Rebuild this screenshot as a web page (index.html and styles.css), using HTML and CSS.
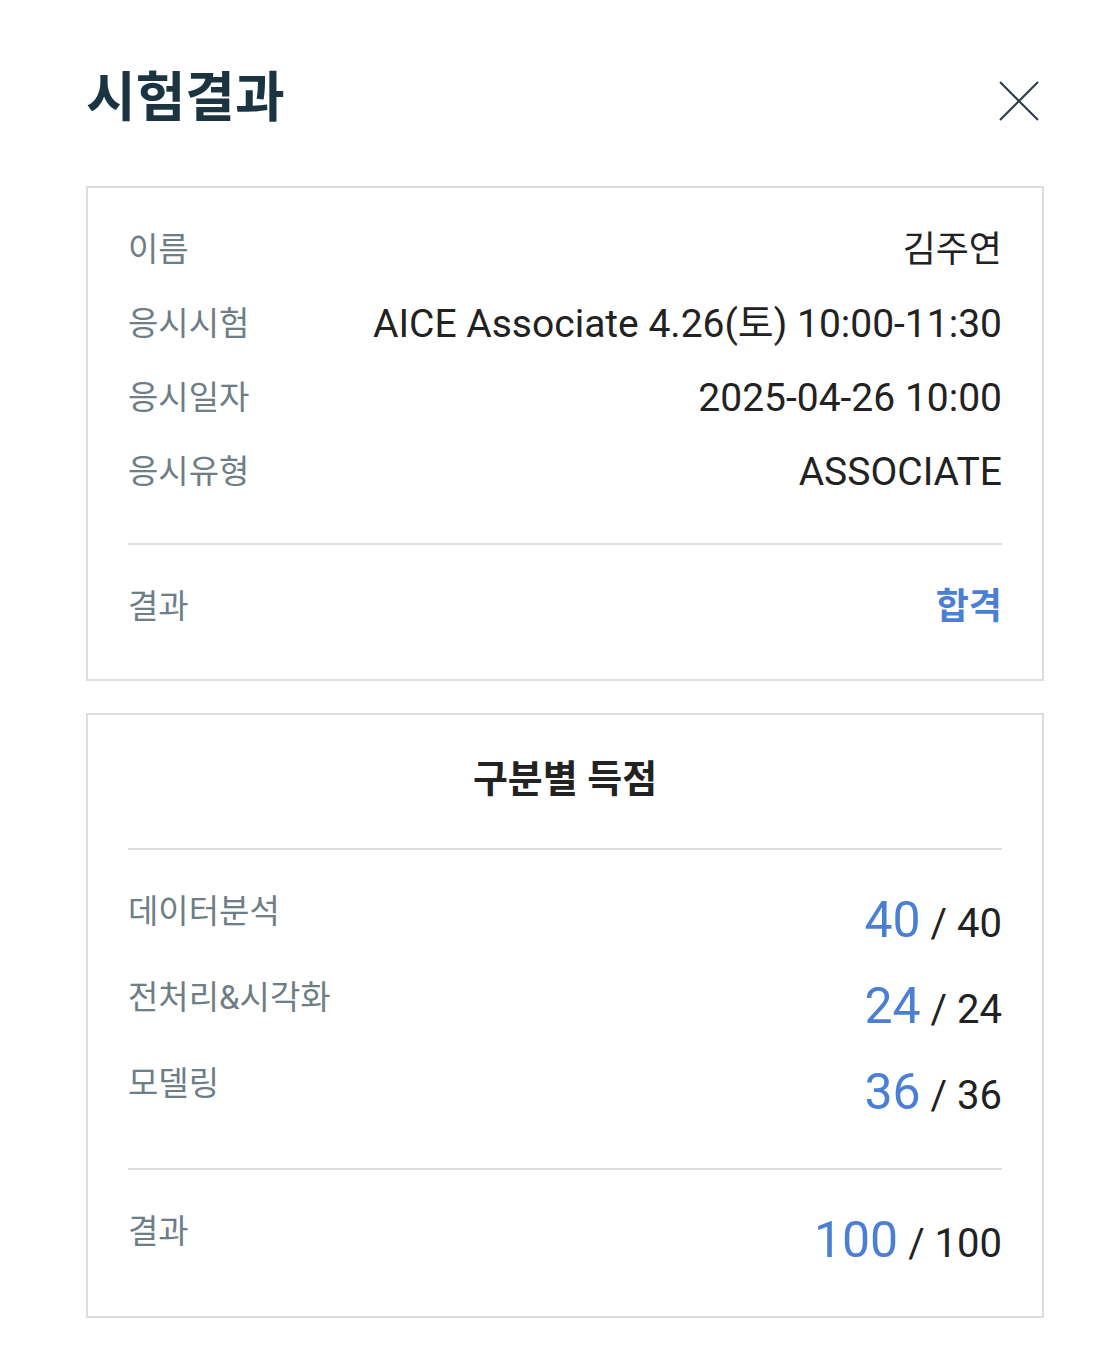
FILE: index.html
```html
<!DOCTYPE html>
<html lang="ko">
<head>
    <meta charset="UTF-8">
    <title>시험결과</title>
    <link rel="stylesheet" href="styles.css">
</head>
<body>
    <div class="page">
        <div class="header">
            <h1 class="title">시험결과</h1>
            <button class="close" aria-label="닫기">
                <svg viewBox="0 0 40 40" width="40" height="40">
                    <path d="M1 1 L39 39 M39 1 L1 39" stroke="#2b3a4a" stroke-width="2" fill="none"/>
                </svg>
            </button>
        </div>

        <div class="card">
            <div class="info">
                <div class="row"><span class="label">이름</span><span class="value name">김주연</span></div>
                <div class="row"><span class="label">응시시험</span><span class="value">AICE Associate 4.26(토) 10:00-11:30</span></div>
                <div class="row"><span class="label">응시일자</span><span class="value">2025-04-26 10:00</span></div>
                <div class="row"><span class="label">응시유형</span><span class="value">ASSOCIATE</span></div>
            </div>
            <div class="divider"></div>
            <div class="row result"><span class="label">결과</span><span class="pass">합격</span></div>
        </div>

        <div class="card scores">
            <h2 class="card-title">구분별 득점</h2>
            <div class="divider"></div>
            <div class="score-list">
                <div class="score-row"><span class="label">데이터분석</span><span class="score"><span class="got">40</span><span class="total"> / 40</span></span></div>
                <div class="score-row"><span class="label">전처리&amp;시각화</span><span class="score"><span class="got">24</span><span class="total"> / 24</span></span></div>
                <div class="score-row"><span class="label">모델링</span><span class="score"><span class="got">36</span><span class="total"> / 36</span></span></div>
            </div>
            <div class="divider"></div>
            <div class="score-list sum">
                <div class="score-row"><span class="label">결과</span><span class="score"><span class="got">100</span><span class="total"> / 100</span></span></div>
            </div>
        </div>
    </div>
</body>
</html>
```

FILE: styles.css
```css
body {
    margin: 0;
    background: #fff;
    font-family: 'Roboto', 'Noto Sans CJK KR', sans-serif;
    color: #222;
}

.page {
    padding: 61px 68px 40px 86px;
}

.header {
    display: flex;
    justify-content: space-between;
    align-items: center;
    height: 76px;
    margin-bottom: 49px;
}

.title {
    margin: 0;
    font-size: 54px;
    line-height: 76px;
    font-weight: 700;
    color: #1a3442;
}

.close {
    width: 40px;
    height: 40px;
    padding: 0;
    margin: 4px 5px 0 0;
    border: none;
    background: none;
    cursor: pointer;
}

.close svg {
    display: block;
}

.card {
    border: 2px solid #dedede;
    padding: 25px 40px 35px;
}

.card + .card {
    margin-top: 32px;
}

.row {
    display: flex;
    justify-content: space-between;
    align-items: center;
    height: 74px;
}

.label {
    font-size: 33px;
    color: #6e7e86;
}

.row .label {
    line-height: 74px;
}

.value {
    font-size: 39px;
    line-height: 74px;
    color: #222;
}

.value.name {
    font-size: 36px;
}

.divider {
    height: 2px;
    background: #dedede;
}

.info + .divider {
    margin-top: 34px;
}

.result {
    margin-top: 25px;
}

.pass {
    font-size: 36px;
    line-height: 74px;
    font-weight: 700;
    color: #4a7fd4;
}

/* 구분별 득점 */
.scores {
    padding: 24px 40px 42px;
}

.card-title {
    margin: 0 0 29px;
    text-align: center;
    font-size: 38px;
    line-height: 80px;
    font-weight: 700;
    color: #222;
}

.score-list {
    padding: 44px 0 42px;
}

.score-list.sum {
    padding-bottom: 0;
}

.score-row {
    display: flex;
    justify-content: space-between;
    align-items: flex-start;
}

.score-row + .score-row {
    margin-top: 26px;
}

.score-row .label {
    line-height: 36px;
}

.score {
    font-size: 40px;
    line-height: 60px;
    white-space: nowrap;
}

.got {
    font-size: 50px;
    line-height: 1;
    color: #4a7fd4;
}

.total {
    color: #222;
}
```
